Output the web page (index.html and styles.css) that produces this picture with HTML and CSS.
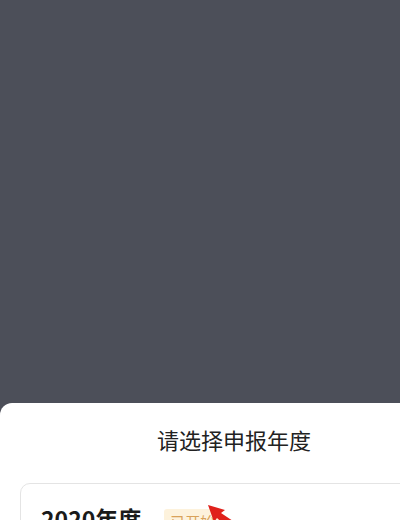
FILE: index.html
```html
<!DOCTYPE html>
<html lang="zh">
<head>
<meta charset="utf-8">
<link rel="stylesheet" href="styles.css">
</head>
<body>
<div class="backdrop"></div>
<div class="sheet">
  <div class="title">请选择申报年度</div>
  <div class="card">
    <div class="row">
      <span class="year">2020年度</span>
      <span class="badge">已开始</span>
    </div>
  </div>
</div>
<svg class="arrow" width="50" height="30" viewBox="0 0 50 30">
  <polygon points="8,6 25,11 21,14 45,30 29,30 17,19 14,23" fill="#e0211b"/>
</svg>
</body>
</html>
```
FILE: styles.css
```css
html, body {
  margin: 0;
  padding: 0;
}
body {
  width: 400px;
  height: 520px;
  overflow: hidden;
  background: #4c4f59;
  font-family: "Noto Sans CJK SC", "Noto Sans", sans-serif;
  position: relative;
}
.backdrop {
  height: 403px;
}
.sheet {
  width: 468px;
  height: 200px;
  background: #ffffff;
  border-radius: 12px 12px 0 0;
}
.title {
  height: 72px;
  line-height: 72px;
  text-align: center;
  font-size: 22px;
  color: #222222;
}
.card {
  margin: 8px 20px 0;
  border: 1px solid #e4e4e4;
  border-radius: 10px;
  padding: 18px 20px;
}
.row {
  display: flex;
  align-items: center;
  height: 32px;
}
.year {
  font-size: 23px;
  font-weight: 600;
  color: #1a1a1a;
  line-height: 32px;
}
.badge {
  margin-left: 23px;
  background: #fdf2dc;
  color: #d9a25a;
  font-size: 15px;
  line-height: 22px;
  padding: 2px 6px;
  border-radius: 3px;
  margin-top: 8px;
}
.arrow {
  position: absolute;
  left: 200px;
  top: 499px;
}
```
